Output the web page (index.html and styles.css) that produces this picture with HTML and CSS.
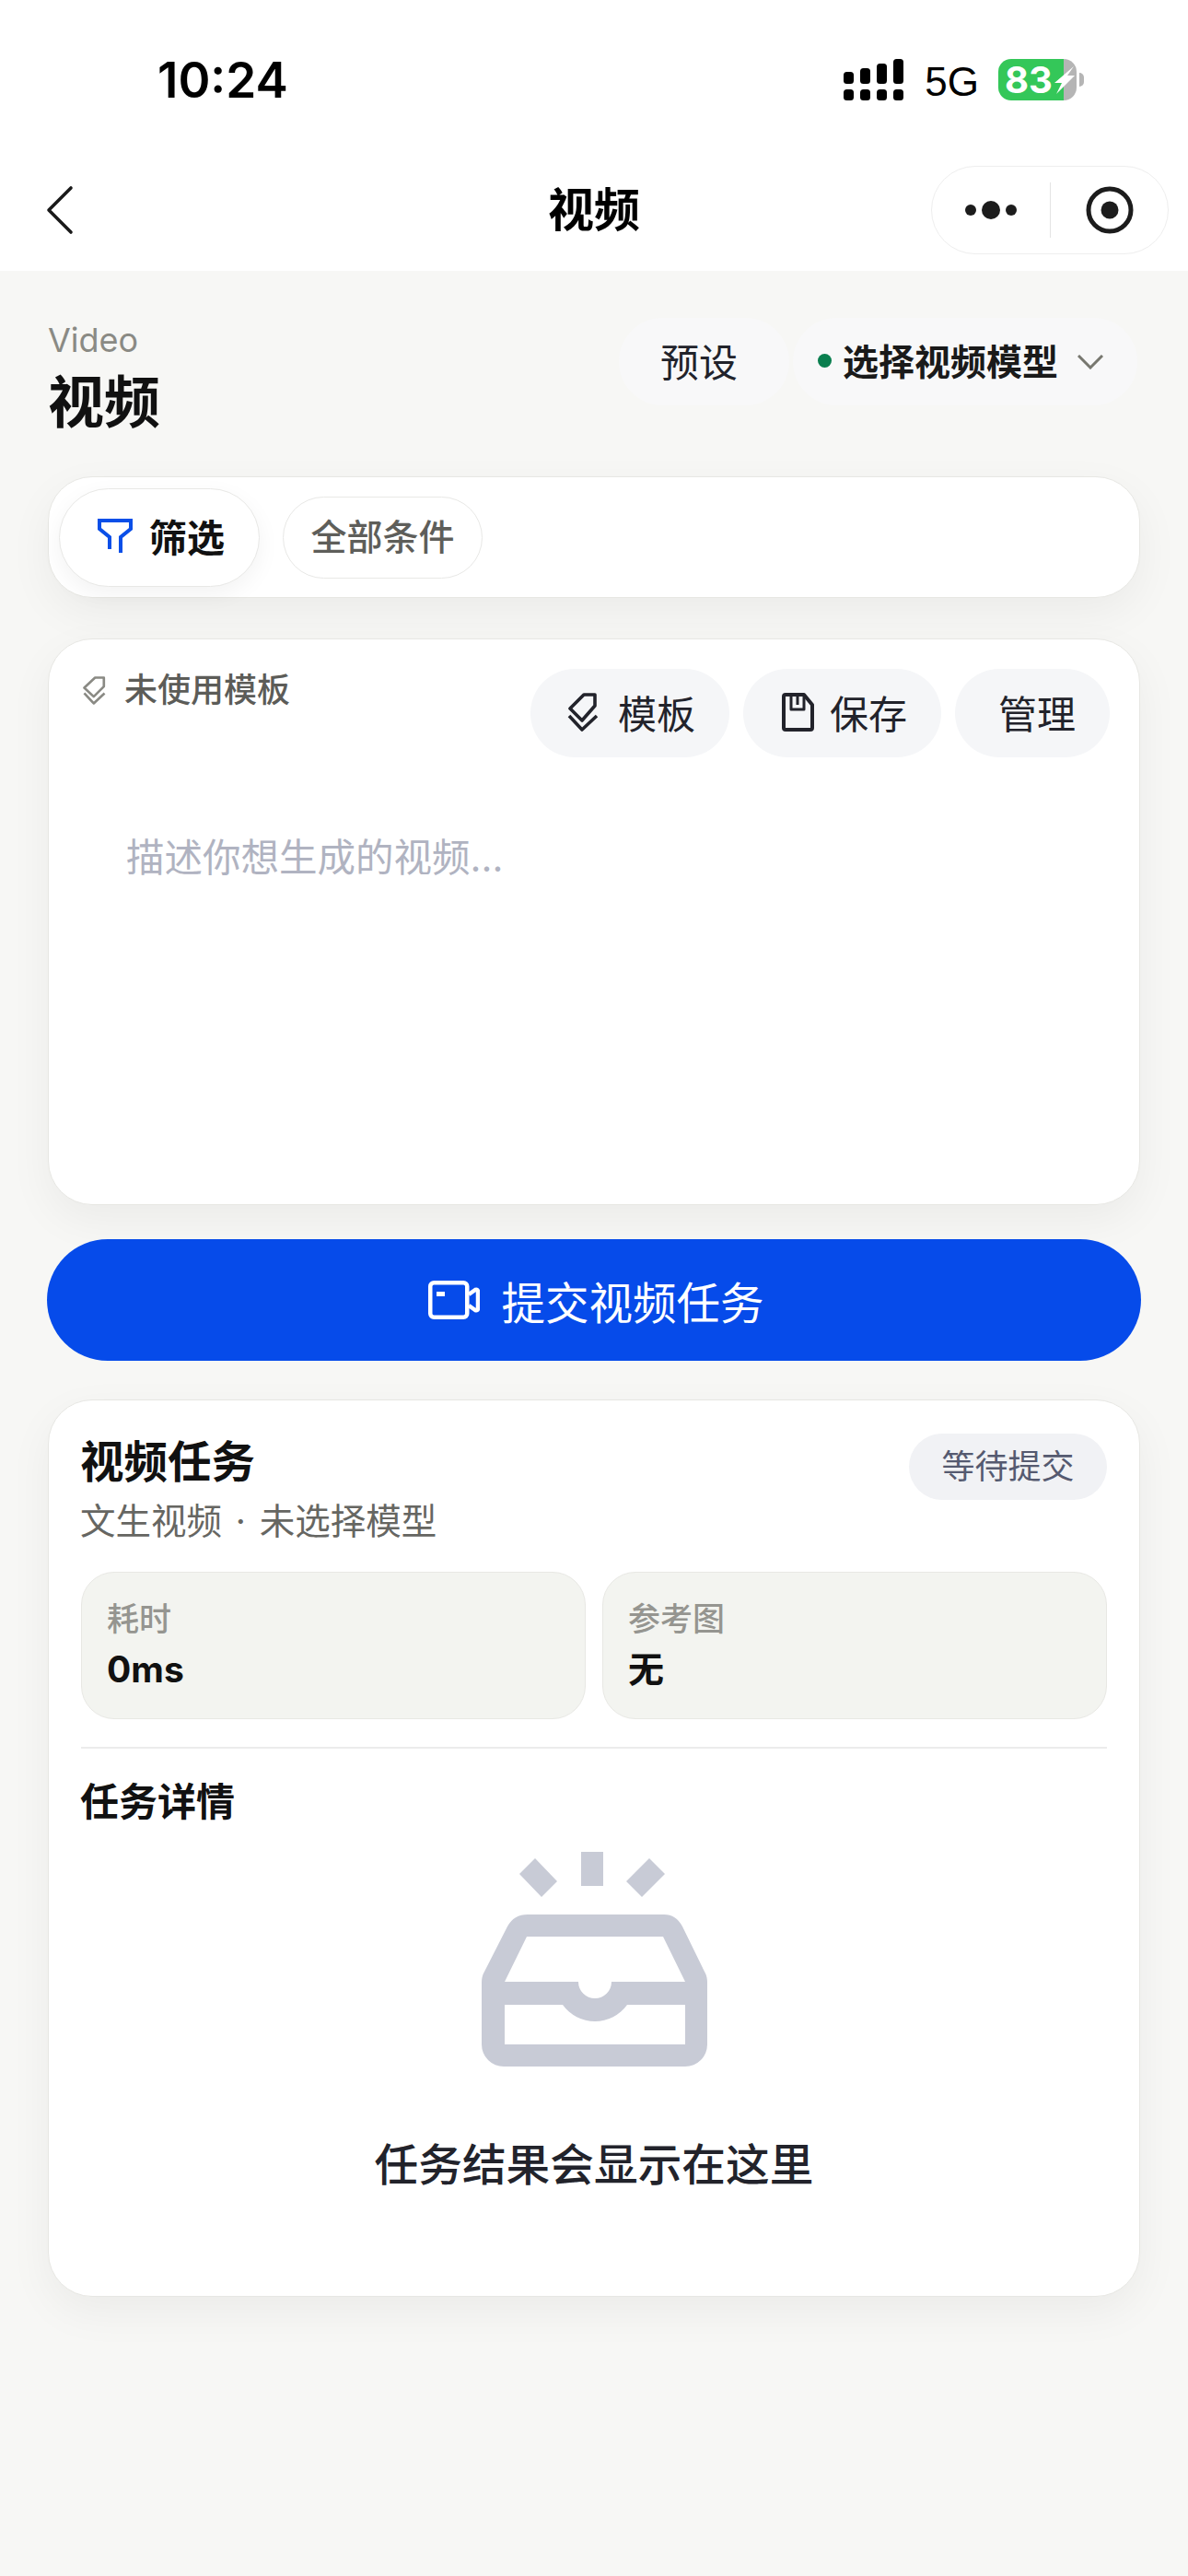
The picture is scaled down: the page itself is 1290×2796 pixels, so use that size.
FILE: index.html
```html
<!DOCTYPE html>
<html lang="zh-CN">
<head>
<meta charset="utf-8">
<title>视频</title>
<link rel="stylesheet" href="styles.css">
</head>
<body>
<header class="top">
  <div class="status">
    <span class="time">10:24</span>
    <div class="status-right">
      <svg class="signal" viewBox="0 0 65 45" width="65" height="45" fill="#000">
        <rect x="0" y="33" width="11" height="12" rx="3.5"/><rect x="18" y="33" width="11" height="12" rx="3.5"/><rect x="36" y="33" width="11" height="12" rx="3.5"/><rect x="54" y="33" width="11" height="12" rx="3.5"/>
        <rect x="0" y="14" width="11" height="13" rx="3.5"/><rect x="18" y="10" width="11" height="17" rx="3.5"/><rect x="36" y="5" width="11" height="22" rx="3.5"/><rect x="54" y="0" width="11" height="27" rx="3.5"/>
      </svg>
      <span class="net">5G</span>
      <div class="battery">
        <span class="battery-num">83</span>
        <svg class="bolt" viewBox="0 0 22 30" width="22" height="30" fill="#fff"><path d="M21 0 0 18h8L2 30l20-20h-8z"/></svg>
      </div>
      <span class="battery-nub"></span>
    </div>
  </div>
  <nav class="nav">
    <svg class="back" viewBox="0 0 30 54" width="30" height="54" fill="none" stroke="#1a1a1a" stroke-width="3.6" stroke-linecap="round" stroke-linejoin="round"><path d="M27 3 3 27l24 24"/></svg>
    <h1 class="nav-title">视频</h1>
    <div class="capsule">
      <svg class="capsule-dots" viewBox="0 0 60 20" width="60" height="20" fill="#1c1c1c"><circle cx="6" cy="10" r="6"/><circle cx="28" cy="10" r="10"/><circle cx="50" cy="10" r="6"/></svg>
      <span class="capsule-line"></span>
      <svg class="capsule-target" viewBox="0 0 54 54" width="54" height="54"><circle cx="27" cy="27" r="23" fill="none" stroke="#1c1c1c" stroke-width="5"/><circle cx="27" cy="27" r="9.5" fill="#1c1c1c"/></svg>
    </div>
  </nav>
</header>

<main class="page">
  <section class="head">
    <div class="head-left">
      <div class="eyebrow">Video</div>
      <div class="page-title">视频</div>
    </div>
    <div class="head-right">
      <div class="head-pill preset">预设</div>
      <div class="head-pill model">
        <span class="model-dot"></span>
        <span class="model-name">选择视频模型</span>
        <svg class="model-chev" viewBox="0 0 28 16" width="28" height="16" fill="none" stroke="#77776f" stroke-width="3"><path d="M1 1l13 13L27 1"/></svg>
      </div>
    </div>
  </section>

  <section class="card filter-card">
    <div class="filter-tab">
      <svg viewBox="0 0 38 38" width="38" height="38" fill="none" stroke="#0a4fe8" stroke-width="4"><path d="M13 33V20L2 11V2h34v9L25 20v17"/></svg>
      <span>筛选</span>
    </div>
    <div class="filter-all">全部条件</div>
  </section>

  <section class="card prompt-card">
    <div class="prompt-top">
      <div class="tpl-state">
        <svg viewBox="0 0 34 42" width="25" height="33" fill="none" stroke="#8a8a84" stroke-width="3.6" stroke-linejoin="round"><path d="M2 17 18 2h13v13L16 30z"/><path d="M2 25l14 15 16-15"/></svg>
        <span>未使用模板</span>
      </div>
      <div class="tools">
        <div class="tool tool-tpl">
          <svg viewBox="0 0 34 42" width="34" height="42" fill="none" stroke="#22232b" stroke-width="3.6" stroke-linejoin="round"><path d="M3 17 18 2h12v12L16 30z"/><path d="M2 25l14 15 16-15"/></svg>
          <span>模板</span>
        </div>
        <div class="tool tool-save">
          <svg viewBox="0 0 36 42" width="36" height="42" fill="none" stroke="#22232b" stroke-width="4" stroke-linejoin="round"><path d="M5 2h20l9 11v25a2 2 0 0 1-2 2H5a2 2 0 0 1-2-2V4a2 2 0 0 1 2-2z"/><path d="M11 2v16h14V2" stroke-width="3"/><path d="M18 4v9" stroke-width="3"/></svg>
          <span>保存</span>
        </div>
        <div class="tool tool-manage"><span>管理</span></div>
      </div>
    </div>
    <div class="placeholder">描述你想生成的视频...</div>
  </section>

  <button class="submit" type="button">
    <svg viewBox="0 0 56 42" width="56" height="42" fill="none" stroke="#fff" stroke-width="4.5" stroke-linejoin="round"><rect x="2.25" y="2.25" width="40" height="37.5" rx="4"/><path d="M44 15l7-5q3-1 3 2v18q0 3-3 2l-7-5"/><rect x="9" y="12" width="9" height="5" fill="#fff" stroke="none"/></svg>
    <span>提交视频任务</span>
  </button>

  <section class="card result-card">
    <div class="result-head">
      <div>
        <h2 class="result-title">视频任务</h2>
        <div class="result-sub">文生视频 · 未选择模型</div>
      </div>
      <div class="result-status">等待提交</div>
    </div>
    <div class="stats">
      <div class="stat"><div class="stat-label">耗时</div><div class="stat-value">0ms</div></div>
      <div class="stat"><div class="stat-label">参考图</div><div class="stat-value">无</div></div>
    </div>
    <div class="divider"></div>
    <h3 class="detail-title">任务详情</h3>
    <div class="empty">
      <svg viewBox="62 20 245 233" width="245" height="233" fill="#c8cbd6" fill-rule="evenodd">
        <path d="M112 88H260Q273 88 280 101L304 150Q307 155 307 162V229A24 24 0 0 1 283 253H86A24 24 0 0 1 62 229V162Q62 155 65 150L90 101Q97 88 112 88ZM111 112 87 161H167A18 18 0 0 0 203 161H283L259 112ZM87 186V229H283V186H220A43 43 0 0 1 150 186Z"/>
        <rect x="170" y="20" width="24" height="37"/>
        <path d="M120 27 144 52 127 69 103 44ZM244 27 261 44 236 69 219 52Z"/>
      </svg>
      <div class="empty-text">任务结果会显示在这里</div>
    </div>
  </section>
</main>
</body>
</html>
```
FILE: styles.css
```css
* { box-sizing: border-box; }
html, body { margin: 0; padding: 0; }
body {
  width: 1290px;
  height: 2796px;
  overflow: hidden;
  background: #f7f7f5;
  font-family: "Inter", "Noto Sans CJK SC", sans-serif;
  color: #111;
}
h1, h2, h3 { margin: 0; }

.top { background: #fff; height: 294px; }
.status {
  height: 165px;
  padding: 62px 113px 0 171px;
  display: flex;
  justify-content: space-between;
  align-items: flex-start;
}
.time {
  font-weight: 600;
  font-size: 53px;
  line-height: 50px;
  color: #000;
}
.status-right { display: flex; align-items: flex-start; padding-top: 2px; }
.signal { display: block; }
.net {
  font-family: "Liberation Sans", sans-serif;
  font-size: 44px;
  line-height: 45px;
  color: #000;
  margin: 2px 0 0 23px;
}
.battery {
  position: relative;
  width: 85px;
  height: 45px;
  margin-left: 21px;
  border-radius: 14px;
  background: linear-gradient(90deg, #34c759 71px, #b5b5b5 71px);
  padding-left: 7px;
}
.battery-num {
  font-weight: 700;
  font-size: 40px;
  line-height: 45px;
  color: #fff;
  display: block;
}
.bolt { position: absolute; left: 61px; top: 8px; }
.battery-nub {
  width: 5px;
  height: 15px;
  margin: 15px 0 0 3px;
  background: #b5b5b5;
  border-radius: 0 5px 5px 0;
}

.nav {
  position: relative;
  height: 129px;
  padding: 15px 21px 0 50px;
  display: flex;
  justify-content: space-between;
  align-items: flex-start;
}
.back { margin-top: 21px; }
.nav-title {
  position: absolute;
  left: 0;
  right: 0;
  top: 33px;
  text-align: center;
  font-size: 50px;
  line-height: 60px;
  font-weight: 700;
  color: #000;
}
.capsule {
  width: 258px;
  height: 96px;
  border: 1.5px solid #eeeeee;
  border-radius: 48px;
  background: #fff;
  display: flex;
  align-items: center;
  padding-left: 36px;
}
.capsule-dots { display: block; }
.capsule-line { width: 1px; height: 60px; background: #e4e4e4; margin-left: 32px; }
.capsule-target { display: block; margin-left: 37px; }

.page { padding: 0 52px; }
.head {
  height: 223px;
  display: flex;
  justify-content: space-between;
  align-items: flex-start;
}
.head-left { padding-top: 53px; }
.eyebrow {
  font-size: 36px;
  line-height: 44px;
  color: #8a8a84;
}
.page-title {
  margin-top: 15px;
  font-size: 61px;
  line-height: 62px;
  font-weight: 700;
  color: #111;
}
.head-right {
  display: flex;
  gap: 4px;
  margin: 51px 3px 0 0;
}
.head-pill {
  height: 95px;
  border-radius: 48px;
  background: #f8f8f9;
  display: flex;
  align-items: center;
  padding-bottom: 4px;
}
.preset {
  width: 185px;
  padding-right: 11px;
  justify-content: center;
  font-size: 42px;
  color: #22232b;
}
.model { padding: 0 37px 6px 27px; }
.model-dot { width: 15px; height: 15px; margin-top: 4px; border-radius: 50%; background: #0a7f4f; }
.model-name { margin-left: 12px; font-size: 39px; font-weight: 700; color: #1a1a1a; }
.model-chev { margin: 6px 0 0 21px; }

.card {
  background: #fff;
  border: 1px solid #e7e7e3;
  border-radius: 48px;
  box-shadow: 0 16px 48px rgba(20, 20, 10, 0.05);
}
.filter-card {
  height: 132px;
  padding: 0 11px;
  display: flex;
  align-items: center;
  gap: 25px;
}
.filter-tab {
  width: 218px;
  height: 107px;
  padding: 0 0 5px 41px;
  border: 1.5px solid #e8e8e6;
  border-radius: 54px;
  background: #fff;
  box-shadow: 0 8px 24px rgba(20, 20, 10, 0.05);
  display: flex;
  align-items: center;
  gap: 18px;
  font-size: 41px;
  font-weight: 700;
  color: #111;
}
.filter-tab svg { margin-top: 2px; }
.filter-all {
  width: 217px;
  height: 89px;
  padding-bottom: 7px;
  border: 1.5px solid #e8e8e6;
  border-radius: 45px;
  display: flex;
  align-items: center;
  justify-content: center;
  font-size: 39px;
  font-weight: 500;
  color: #5e5e5a;
}

.prompt-card {
  height: 615px;
  margin-top: 44px;
  padding: 32px 32px 0 37px;
}
.prompt-top { display: flex; justify-content: space-between; align-items: flex-start; }
.tpl-state {
  margin-top: 3px;
  display: flex;
  align-items: center;
  gap: 20px;
  font-size: 36px;
  line-height: 40px;
  font-weight: 500;
  color: #5c5c58;
}
.tools { display: flex; gap: 15px; }
.tool {
  height: 96px;
  border-radius: 48px;
  background: #f5f6f8;
  display: flex;
  align-items: center;
  font-size: 42px;
  color: #22232b;
}
.tool svg { margin-top: 2px; }
.tool-tpl { padding: 0 37px 4px 40px; gap: 21px; }
.tool-save { padding: 0 37px 4px 41px; gap: 17px; }
.tool-manage { padding: 0 37px 4px 47px; }
.placeholder {
  margin: 86px 0 0 47px;
  font-size: 41.5px;
  line-height: 46px;
  color: #b0b3c1;
}

.submit {
  width: 1188px;
  height: 132px;
  margin: 37px 0 0 -1px;
  padding: 0 0 0 4px;
  border: 0;
  border-radius: 66px;
  background: #064bea;
  color: #fff;
  display: flex;
  align-items: center;
  justify-content: center;
  gap: 24px;
  font-family: inherit;
  font-size: 47.5px;
}
.submit svg { display: block; }

.result-card {
  margin-top: 42px;
  padding: 36px 35px 118px;
}
.result-head { display: flex; justify-content: space-between; align-items: flex-start; }
.result-title { margin: 7px 0 0 -1px; font-size: 47.5px; line-height: 48px; font-weight: 700; color: #111; }
.result-sub { margin: 21px 0 0 -1px; font-size: 38.5px; line-height: 38px; word-spacing: 4px; color: #666662; }
.result-status {
  width: 215px;
  height: 72px;
  padding-bottom: 6px;
  border-radius: 36px;
  background: #f1f2f5;
  display: flex;
  align-items: center;
  justify-content: center;
  font-size: 36px;
  color: #555a70;
}
.stats {
  margin-top: 36px;
  display: grid;
  grid-template-columns: 1fr 1fr;
  gap: 18px;
}
.stat {
  height: 160px;
  padding: 32px 27px 0;
  background: #f3f4f0;
  border: 1.5px solid #e8e8e4;
  border-radius: 36px;
}
.stat-label { font-size: 35px; line-height: 36px; color: #959590; font-weight: 500; }
.stat-value { margin-top: 17px; font-size: 39px; line-height: 40px; font-weight: 700; color: #111; }
.divider { height: 1.5px; margin-top: 30px; background: #ececec; }
.detail-title { margin: 37px 0 0 -1px; font-size: 42px; line-height: 42px; font-weight: 700; color: #111; }
.empty { margin-top: 33px; display: flex; flex-direction: column; align-items: center; }
.empty svg { display: block; }
.empty-text { margin-top: 83px; font-size: 47.7px; line-height: 48px; font-weight: 500; color: #22232b; }
```
